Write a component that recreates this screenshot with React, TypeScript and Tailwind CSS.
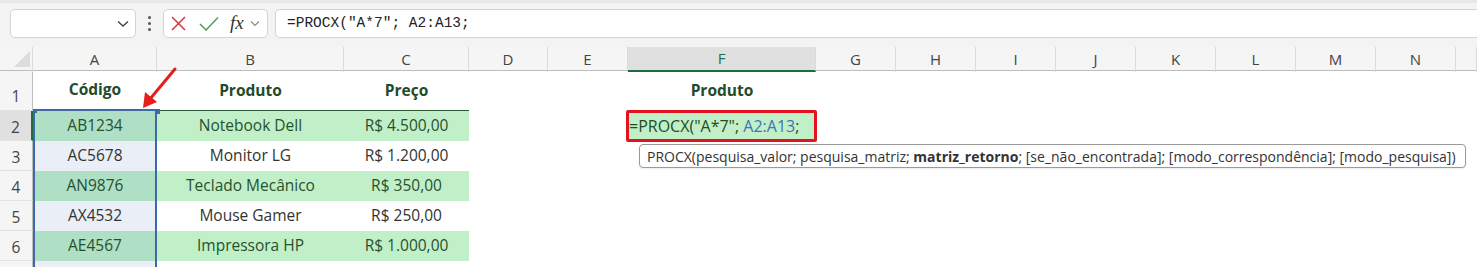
import React from "react";

const cols = ["A", "B", "C", "D", "E", "F", "G", "H", "I", "J", "K", "L", "M", "N", ""];
const grid =
  "grid grid-cols-[33px_124px_187px_125px_79px_80px_188px_80px_80px_80px_80px_80px_80px_80px_80px_1fr]";

const data = [
  ["AB1234", "Notebook Dell", "R$ 4.500,00"],
  ["AC5678", "Monitor LG", "R$ 1.200,00"],
  ["AN9876", "Teclado Mecânico", "R$ 350,00"],
  ["AX4532", "Mouse Gamer", "R$ 250,00"],
  ["AE4567", "Impressora HP", "R$ 1.000,00"],
];

const font = { fontFamily: '"Open Sans", "Noto Sans", sans-serif' };

function FormulaBar() {
  return (
    <div className="h-[47px] bg-[#f3f3f3] flex items-start pt-[9px] pl-[10px] gap-0 border-t-[3px] border-[#e8e8e8]">
      <div className="w-[126px] h-[29px] -mt-[3px] bg-white border border-[#d4d4d4] rounded-[5px] flex items-center justify-end pr-[6px]">
        <svg width="12" height="8" viewBox="0 0 12 8">
          <path d="M1 1.5 L6 6 L11 1.5" fill="none" stroke="#444" strokeWidth="1.4" />
        </svg>
      </div>
      <div className="w-[27px] h-[29px] -mt-[3px] flex flex-col items-center justify-center gap-[3px]">
        <div className="w-[3px] h-[3px] rounded-full bg-[#555]" />
        <div className="w-[3px] h-[3px] rounded-full bg-[#555]" />
        <div className="w-[3px] h-[3px] rounded-full bg-[#555]" />
      </div>
      <div className="w-[105px] h-[29px] -mt-[3px] bg-white border border-[#d4d4d4] rounded-[5px] flex items-center pl-[7px]">
        <svg width="15" height="15" viewBox="0 0 15 15">
          <path d="M1 1 L14 14 M14 1 L1 14" stroke="#d3393d" strokeWidth="1.5" fill="none" />
        </svg>
        <svg width="20" height="15" viewBox="0 0 20 15" className="ml-[13px]">
          <path d="M1 8 L7 14 L19 1.5" stroke="#4d9e62" strokeWidth="1.5" fill="none" />
        </svg>
        <span
          className="ml-[11px] text-[19px] italic leading-none text-[#333] -mt-[2px]"
          style={{ fontFamily: '"Liberation Serif", serif' }}
        >
          fx
        </span>
        <svg width="10" height="7" viewBox="0 0 10 7" className="ml-[6px]">
          <path d="M1 1.5 L5 5.5 L9 1.5" fill="none" stroke="#888" strokeWidth="1.1" />
        </svg>
      </div>
      <div className="flex-1 ml-[7px] h-[29px] -mt-[3px] bg-white border border-[#d4d4d4] border-r-0 rounded-l-[5px] flex items-center pl-[11px]">
        <span className="text-[14.5px] text-[#222] whitespace-pre" style={{ fontFamily: '"Liberation Mono", monospace' }}>
          =PROCX("A*7"; A2:A13;
        </span>
      </div>
    </div>
  );
}

function ColHeaders() {
  return (
    <div className={`${grid} h-[24px] bg-[#f5f5f5] border-b border-[#bdbdbd]`}>
      <div className="relative border-r border-[#dadada]">
        <svg width="18" height="18" viewBox="0 0 18 18" className="absolute left-[13px] top-[3px]">
          <path d="M17 1 L17 17 L1 17 Z" fill="#dcdcdc" />
        </svg>
      </div>
      {cols.map((c, i) => (
        <div
          key={i}
          className={`flex items-center justify-center text-[15px] text-[#444] border-r border-[#dadada] ${
            c === "F" ? "bg-[#e0e0e0] border-b-2 border-b-[#1e6b41] text-[#217346]" : ""
          }`}
          style={font}
        >
          {c}
        </div>
      ))}
    </div>
  );
}

function RowNum({ n, active, tall }: { n?: number; active?: boolean; tall?: boolean }) {
  return (
    <div
      className={`flex items-end justify-center text-[15.5px] text-[#444] border-b border-[#e2e2e2] ${
        tall ? "pb-[2px]" : "pb-[1px]"
      } ${active ? "bg-[#e0e0e0] border-r-2 border-r-[#1e6b41]" : "bg-[#f5f5f5] border-r border-r-[#bdbdbd]"}`}
      style={font}
    >
      {n}
    </div>
  );
}

export default function App() {
  return (
    <div className="w-[1477px] h-[267px] overflow-hidden bg-white relative" style={font}>
      <FormulaBar />
      <ColHeaders />
      {/* Row 1 */}
      <div className={`${grid} h-[40px]`}>
        <RowNum n={1} tall />
        <div className="flex items-center justify-center font-bold text-[15.5px] text-[#234a2b] border-b-2 border-[#3b6aa5]">Código</div>
        <div className="flex items-center justify-center font-bold text-[15.5px] text-[#234a2b] border-b border-[#2b5a33]">Produto</div>
        <div className="flex items-center justify-center font-bold text-[15.5px] text-[#234a2b] border-b border-[#2b5a33]">Preço</div>
        <div />
        <div />
        <div className="flex items-center justify-center font-bold text-[15.5px] text-[#234a2b]">Produto</div>
      </div>
      {data.map((r, i) => {
        const green = i % 2 === 0;
        return (
          <div key={i} className={`${grid} h-[30px]`}>
            <RowNum n={i + 2} active={i === 0} />
            <div
              className={`flex items-center justify-center text-[15.5px] border-l-2 border-r-2 border-[#3b6aa5] ${
                green ? "bg-[#afdfc4] text-[#27502f]" : "bg-[#e9eef7] text-[#333]"
              }`}
            >
              {r[0]}
            </div>
            <div className={`flex items-center justify-center text-[15.5px] ${green ? "bg-[#c1f0c8] text-[#27502f]" : "text-[#333]"}`}>
              {r[1]}
            </div>
            <div className={`flex items-center justify-center text-[15.5px] ${green ? "bg-[#c1f0c8] text-[#27502f]" : "text-[#333]"}`}>
              {r[2]}
            </div>
            <div />
            <div />
            {i === 0 ? (
              <div className="relative bg-[#c1f0c8] flex items-center text-[16px] text-[#1f4d27] whitespace-pre pl-[1px]">
                <span>=PROCX("A*7"; </span>
                <span className="text-[#3d72b8]">A2:A13</span>
                <span>;</span>
                <div className="absolute -left-[2px] -top-[1px] -right-[1px] -bottom-[1px] border-[3px] border-[#e3121c] rounded-[2px]" />
              </div>
            ) : (
              <div />
            )}
          </div>
        );
      })}
      <div className={`${grid} h-[30px]`}>
        <RowNum />
        <div className="border-l-2 border-r-2 border-[#3b6aa5] bg-[#e9eef7]" />
      </div>

      {/* selection handles */}
      <div className="absolute left-[33px] top-[109px] w-[4px] h-[4px] bg-[#3b6aa5]" />
      <div className="absolute left-[155px] top-[109px] w-[5px] h-[5px] bg-[#3b6aa5]" />

      {/* arrow */}
      <svg className="absolute left-[130px] top-[60px]" width="60" height="60" viewBox="0 0 60 60">
        <path d="M45 9 L20 39" stroke="#e5201c" strokeWidth="3" strokeLinecap="round" />
        <path d="M13 48 L15 32 L27 42 Z" fill="#e5201c" />
      </svg>

      {/* tooltip */}
      <div
        className="absolute left-[639px] top-[144px] w-[827px] h-[24px] bg-white border border-[#9a9a9a] rounded-[4px] flex items-center pl-[7px] text-[14px] text-[#333] whitespace-pre shadow-[0_1px_2px_rgba(0,0,0,0.08)]"
      >
        <span>PROCX(pesquisa_valor; pesquisa_matriz; </span>
        <span className="font-bold">matriz_retorno</span>
        <span>; [se_não_encontrada]; [modo_correspondência]; [modo_pesquisa])</span>
      </div>
    </div>
  );
}
